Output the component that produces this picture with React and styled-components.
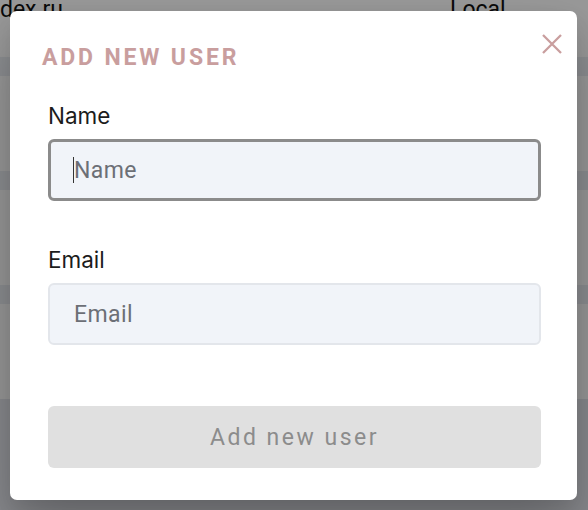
import React from "react";
import styled, { createGlobalStyle } from "styled-components";

const Global = createGlobalStyle`
  html, body { margin: 0; padding: 0; }
  body { background: #f4f4f4; font-family: Inter, "Noto Sans", sans-serif; overflow: hidden; }
  * { box-sizing: border-box; }
`;

const Page = styled.div`
  width: 588px;
  height: 510px;
  position: relative;
  overflow: hidden;
  background: #fafafa;
`;

const Table = styled.div`
  display: flex;
  flex-direction: column;
  margin-top: -38px;
`;

const Row = styled.div`
  height: 95px;
  display: grid;
  grid-template-columns: 450px 1fr;
  align-items: center;
  font-family: Roboto, sans-serif;
  font-size: 23px;
  color: #111;
  background: #ffffff;
`;

const Band = styled.div`
  height: 19px;
  background: #eceef3;
`;

const Foot = styled.div`
  height: 200px;
  background: #e6e8ee;
`;

const Cell = styled.div`
  white-space: nowrap;
  margin-left: ${(p) => (p.$shift ? p.$shift : "0px")};
`;

const Overlay = styled.div`
  position: absolute;
  inset: 0;
  background: rgba(0, 0, 0, 0.4);
  display: flex;
  align-items: flex-start;
  justify-content: flex-start;
  padding: 11px 0 0 10px;
`;

const Modal = styled.div`
  position: relative;
  width: 567px;
  height: 489px;
  background: #fff;
  border-radius: 7px;
  box-shadow: 0 30px 60px rgba(0, 0, 0, 0.25), 0 10px 20px rgba(0, 0, 0, 0.08);
  display: flex;
  flex-direction: column;
`;

const Header = styled.div`
  padding: 32px 32px 0 32px;
  display: flex;
  align-items: center;
`;

const Title = styled.h2`
  margin: 0;
  font-family: Roboto, sans-serif;
  font-weight: 700;
  font-size: 23px;
  line-height: 30px;
  letter-spacing: 2.85px;
  color: #c99e9e;
`;

const Close = styled.button`
  position: absolute;
  top: 20px;
  right: 12px;
  width: 26px;
  height: 26px;
  padding: 0;
  border: none;
  background: transparent;
  display: flex;
  align-items: center;
  justify-content: center;
`;

const Body = styled.form`
  padding: 0 36px 0 38px;
  display: flex;
  flex-direction: column;
`;

const Label = styled.label`
  display: block;
  font-family: Inter, sans-serif;
  font-size: 22.5px;
  line-height: 28px;
  color: #1c1c1c;
  margin-top: ${(p) => p.$top};
`;

const Field = styled.div`
  position: relative;
  margin-top: 9px;
`;

const Input = styled.input`
  display: block;
  width: 100%;
  height: 62px;
  padding: 0 ${(p) => (p.$focused ? "23px" : "24px")};
  background: #f1f4f9;
  border: ${(p) => (p.$focused ? "3px solid #8b8b8b" : "2px solid #e3e6eb")};
  border-radius: 6px;
  font-family: Roboto, sans-serif;
  font-size: 23px;
  color: #222;
  outline: none;
  &::placeholder {
    color: #6c6f76;
    letter-spacing: 0.4px;
  }
`;

const Caret = styled.span`
  position: absolute;
  left: 25px;
  top: 18px;
  width: 1px;
  height: 26px;
  background: #333;
`;

const Submit = styled.button`
  margin-top: 61px;
  height: 62px;
  width: 100%;
  border: none;
  border-radius: 6px;
  background: #e0e0e0;
  color: #8c8c8c;
  font-family: Roboto, sans-serif;
  font-size: 23px;
  letter-spacing: 2.5px;
`;

export default function App() {
  return (
    <>
      <Global />
      <Page>
        <Table>
          <Row>
            <Cell $shift="-36px">yandex.ru</Cell>
            <Cell>Local</Cell>
          </Row>
          <Band />
          <Row />
          <Band />
          <Row />
          <Band />
          <Row />
          <Foot />
        </Table>
        <Overlay>
          <Modal>
            <Header>
              <Title>ADD NEW USER</Title>
            </Header>
            <Close aria-label="Close">
              <svg width="22" height="22" viewBox="0 0 22 22">
                <path d="M2 2 L20 20 M20 2 L2 20" stroke="#c99e9e" strokeWidth="2.3" fill="none" />
              </svg>
            </Close>
            <Body onSubmit={(e) => e.preventDefault()}>
              <Label $top="29px">Name</Label>
              <Field>
                <Input $focused placeholder="Name" />
                <Caret />
              </Field>
              <Label $top="45px">Email</Label>
              <Field>
                <Input placeholder="Email" />
              </Field>
              <Submit type="button">Add new user</Submit>
            </Body>
          </Modal>
        </Overlay>
      </Page>
    </>
  );
}
